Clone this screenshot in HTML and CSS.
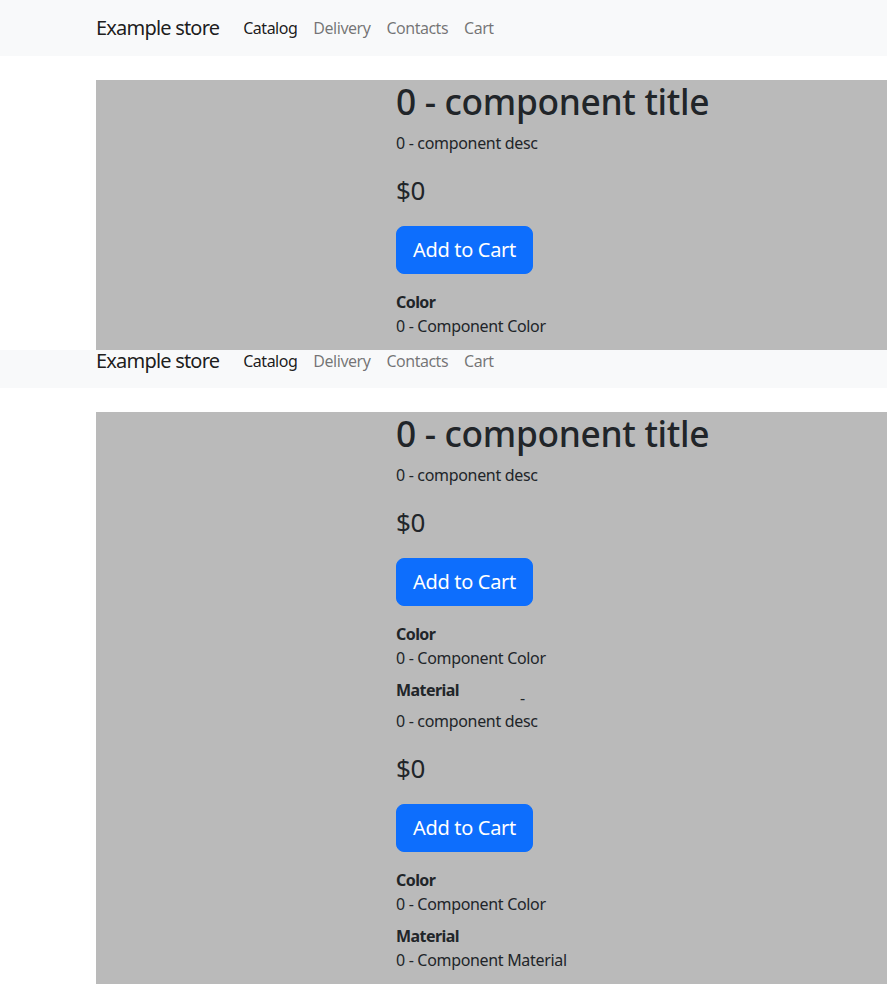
FILE: index.html
```html
<!DOCTYPE html>
<html lang="en">
<head>
<meta charset="utf-8">
<title>Example store</title>
<link rel="stylesheet" href="styles.css">
</head>
<body>
<nav class="navbar">
  <div class="nav-inner">
    <a class="brand" href="#">Example store</a>
    <ul class="nav">
      <li><a class="nav-link active" href="#">Catalog</a></li>
      <li><a class="nav-link" href="#">Delivery</a></li>
      <li><a class="nav-link" href="#">Contacts</a></li>
      <li><a class="nav-link" href="#">Cart</a></li>
    </ul>
  </div>
</nav>
<main class="page">
  <section class="product clipped">
    <div class="media"></div>
    <div class="info">
      <h1 class="title">0 - component title</h1>
      <p class="desc">0 - component desc</p>
      <p class="price">$0</p>
      <button class="btn">Add to Cart</button>
      <dl class="specs">
        <dt>Color</dt>
        <dd>0 - Component Color</dd>
        <dt>Material</dt>
        <dd>0 - Component Material</dd>
      </dl>
    </div>
  </section>
</main>
<nav class="navbar cut">
  <div class="nav-inner">
    <a class="brand" href="#">Example store</a>
    <ul class="nav">
      <li><a class="nav-link active" href="#">Catalog</a></li>
      <li><a class="nav-link" href="#">Delivery</a></li>
      <li><a class="nav-link" href="#">Contacts</a></li>
      <li><a class="nav-link" href="#">Cart</a></li>
    </ul>
  </div>
</nav>
<main class="page">
  <section class="product tall">
    <div class="media"></div>
    <div class="info">
      <h1 class="title">0 - component title</h1>
      <p class="desc">0 - component desc</p>
      <p class="price">$0</p>
      <button class="btn">Add to Cart</button>
      <dl class="specs">
        <dt>Color</dt>
        <dd>0 - Component Color</dd>
        <dt>Material</dt>
      </dl>
      <div class="seam"><span>-</span></div>
      <p class="desc">0 - component desc</p>
      <p class="price">$0</p>
      <button class="btn">Add to Cart</button>
      <dl class="specs">
        <dt>Color</dt>
        <dd>0 - Component Color</dd>
        <dt>Material</dt>
        <dd>0 - Component Material</dd>
      </dl>
    </div>
  </section>
</main>
</body>
</html>
```
FILE: styles.css
```css
* { box-sizing: border-box; }
html, body { margin: 0; padding: 0; }
body {
  font-family: "Noto Sans", "Open Sans", sans-serif;
  font-size: 16px;
  line-height: 1.5;
  color: #212529;
  background: #fff;
  overflow-x: hidden;
  letter-spacing: -0.02em;
}
a { text-decoration: none; }

.navbar {
  background: #f8f9fa;
  padding: 8px 0;
  height: 56px;
}
.nav-inner {
  display: flex;
  align-items: center;
  padding-left: 96px;
}
.brand {
  font-size: 20px;
  line-height: 30px;
  padding: 5px 0;
  margin-right: 16px;
  color: rgba(0, 0, 0, 0.9);
  white-space: nowrap;
  letter-spacing: -0.04em;
}
.nav {
  display: flex;
  list-style: none;
  margin: 0;
  padding: 0;
}
.nav-link {
  display: block;
  padding: 8px;
  line-height: 24px;
  color: rgba(0, 0, 0, 0.55);
  letter-spacing: -0.03em;
}
.nav-link.active { color: rgba(0, 0, 0, 0.9); }

.navbar.cut {
  height: 38px;
  padding: 0;
  overflow: hidden;
}
.navbar.cut .nav-inner { margin-top: -9px; }

.page {
  padding-left: 96px;
  padding-top: 24px;
}
.product {
  display: flex;
  background: #bababa;
}
.product.clipped {
  height: 270px;
  overflow: hidden;
}
.product.tall { padding-bottom: 40px; }
.media {
  flex: 0 0 300px;
}
.info {
  flex: 1;
}
.title {
  margin: 0 0 9px;
  font-size: 35.3px;
  line-height: 1.2;
  font-weight: 500;
}
.desc {
  margin: 0 0 16px;
}
.price {
  margin: 0 0 16px;
  font-size: 26px;
  line-height: 39px;
}
.btn {
  display: inline-block;
  font-family: inherit;
  letter-spacing: inherit;
  font-size: 20px;
  line-height: 30px;
  padding: 8px 16px;
  border: 1px solid #0d6efd;
  border-radius: 8px;
  background: #0d6efd;
  color: #fff;
  margin: 0 0 16px;
  cursor: pointer;
}
.specs {
  margin: 0;
}
.specs dt {
  font-weight: 700;
  letter-spacing: -0.035em;
}
.specs dd {
  margin: 0 0 8px;
}
.seam {
  height: 7px;
  line-height: 0;
  padding-left: 124px;
}
.seam span {
  display: inline-block;
  transform: translateY(-4px);
}
```
